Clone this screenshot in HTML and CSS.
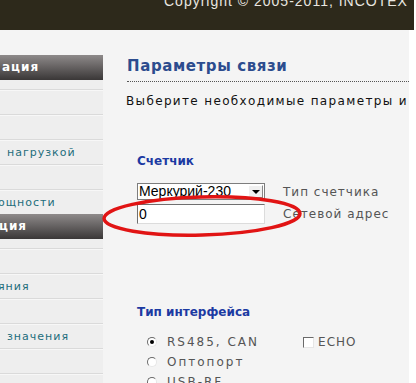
FILE: index.html
```html
<!DOCTYPE html>
<html lang="ru">
<head>
<meta charset="utf-8">
<title>Параметры связи</title>
<link rel="stylesheet" href="styles.css">
</head>
<body>
<div class="page">
  <header class="top">
    <div class="copyright">Copyright © 2005-2011, INCOTEX</div>
  </header>
  <div class="main">
    <nav class="sidebar">
      <div class="side-head"><span class="cut2">ация</span></div>
      <ul class="side-list">
        <li></li>
        <li></li>
        <li><span class="link">нагрузкой</span></li>
        <li></li>
        <li><span class="link cut">ощности</span></li>
      </ul>
      <div class="side-head"><span class="cut">ция</span></div>
      <ul class="side-list">
        <li></li>
        <li><span class="link cut">яния</span></li>
        <li></li>
        <li><span class="link">значения</span></li>
        <li></li>
        <li></li>
      </ul>
    </nav>
    <section class="content">
      <h1 class="title">Параметры связи</h1>
      <p class="intro">Выберите необходимые параметры и</p>

      <div class="group counter">
        <h2 class="group-title">Счетчик</h2>
        <div class="form-row">
          <div class="select"><span class="select-value">Меркурий-230</span><span class="select-btn"><span class="arrow"></span></span></div>
          <span class="field-label">Тип счетчика</span>
        </div>
        <div class="form-row">
          <div class="input">0</div>
          <span class="field-label">Сетевой адрес</span>
        </div>
        <svg class="mark" width="206" height="48" viewBox="0 0 206 48" aria-hidden="true">
          <ellipse cx="102" cy="24" rx="98" ry="19" fill="none" stroke="#e11414" stroke-width="3.5" transform="rotate(-1.5 102 24)"/>
        </svg>
      </div>

      <div class="group iface">
        <h2 class="group-title">Тип интерфейса</h2>
        <div class="opt-row">
          <span class="radio checked"></span><span class="opt-label">RS485, CAN</span>
          <span class="check"></span><span class="opt-label echo">ECHO</span>
        </div>
        <div class="opt-row">
          <span class="radio"></span><span class="opt-label">Оптопорт</span>
        </div>
        <div class="opt-row">
          <span class="radio"></span><span class="opt-label">USB-RF</span>
        </div>
      </div>
    </section>
  </div>
</div>
</body>
</html>
```
FILE: styles.css
```css
html, body {
  margin: 0;
  padding: 0;
  background: #ffffff;
  overflow: hidden;
}
body {
  width: 416px;
  height: 383px;
  font-family: "DejaVu Sans", Verdana, sans-serif;
}
.page {
  width: 414px;
  height: 383px;
  overflow: hidden;
}
.top {
  height: 30px;
  background: #2d291b;
  position: relative;
  overflow: hidden;
}
.copyright {
  position: absolute;
  left: 164px;
  top: -6px;
  font-family: "Liberation Sans", Arial, sans-serif;
  font-size: 14px;
  line-height: 14px;
  letter-spacing: 1px;
  color: #e8e6e0;
  white-space: nowrap;
}
.main {
  display: flex;
  width: 409px;
  height: 353px;
  background: #f4f4f4;
  padding-top: 25px;
  box-sizing: border-box;
}
.sidebar {
  width: 103px;
  flex: none;
  background: #eeeeee;
}
.side-head {
  height: 25px;
  background: linear-gradient(#8e8a8a, #3a3737);
  color: #ffffff;
  font-weight: bold;
  font-size: 12px;
  letter-spacing: 1px;
  line-height: 25px;
  padding-left: 2px;
  overflow: hidden;
  white-space: nowrap;
}
.side-head .cut { margin-left: -3px; }
.side-list {
  list-style: none;
  margin: 0;
  padding: 9px 0 0;
}
.side-list li {
  height: 24px;
  border-top: 1px solid #dadada;
  box-shadow: inset 0 1px 0 #f7f7f7;
  line-height: 25px;
  padding-left: 7px;
  font-size: 11px;
  letter-spacing: 1px;
  color: #1d6d7c;
  overflow: hidden;
  white-space: nowrap;
}
.side-list .link.cut { margin-left: -9px; }
.content {
  flex: 1;
  padding-left: 24px;
  position: relative;
}
.title {
  margin: 1px 0 0;
  font-size: 15px;
  line-height: 21px;
  letter-spacing: 0.6px;
  font-weight: bold;
  color: #2c4c8e;
  padding-bottom: 4px;
  border-bottom: 1px dotted #555555;
}
.intro {
  margin: 11px 0 0;
  font-size: 12px;
  line-height: 16px;
  letter-spacing: 1.35px;
  color: #111111;
  white-space: nowrap;
  margin-left: -1px;
}
.group {
  padding-left: 10px;
  position: relative;
}
.group-title {
  margin: 0;
  font-size: 12px;
  line-height: 16px;
  font-weight: bold;
  color: #1c3aa2;
}
.counter { margin-top: 44px; }
.counter .group-title { margin-bottom: 12px; }
.form-row {
  display: flex;
  align-items: center;
  gap: 18px;
  height: 21px;
}
.form-row + .form-row { margin-top: 1px; }
.select {
  width: 128px;
  height: 17px;
  box-sizing: border-box;
  border: 1px solid #7d7d7d;
  background: #ffffff;
  display: flex;
  align-items: stretch;
}
.select-value {
  flex: 1;
  font-family: "Liberation Sans", Arial, sans-serif;
  font-size: 14px;
  line-height: 15px;
  padding-left: 1px;
  color: #000000;
  overflow: hidden;
}
.select-btn {
  width: 13px;
  margin: 1px;
  background: #f0f0f0;
  border: 1px solid #ffffff;
  border-right-color: #888888;
  border-bottom-color: #888888;
  display: flex;
  align-items: center;
  justify-content: center;
}
.arrow {
  width: 0;
  height: 0;
  border-left: 4px solid transparent;
  border-right: 4px solid transparent;
  border-top: 4px solid #000000;
}
.input {
  width: 128px;
  height: 20px;
  box-sizing: border-box;
  border: 1px solid;
  border-color: #6f6f6f #dcdcdc #dcdcdc #6f6f6f;
  background: #ffffff;
  font-family: "Liberation Sans", Arial, sans-serif;
  font-size: 14px;
  line-height: 18px;
  padding-left: 1px;
  color: #000000;
}
.field-label {
  font-size: 12px;
  letter-spacing: 1px;
  color: #555555;
  white-space: nowrap;
}
.mark {
  position: absolute;
  left: -27px;
  top: 39px;
}
.iface { margin-top: 80px; }
.iface .group-title { margin-bottom: 12px; }
.opt-row {
  display: flex;
  align-items: center;
  height: 20px;
  padding-left: 10px;
}
.radio {
  width: 10px;
  height: 10px;
  box-sizing: border-box;
  border-radius: 50%;
  border: 1px solid;
  border-color: #6a6a6a #e6e6e6 #e6e6e6 #6a6a6a;
  background: #ffffff;
  position: relative;
  flex: none;
}
.radio.checked::after {
  content: "";
  position: absolute;
  left: 2px;
  top: 2px;
  width: 4px;
  height: 4px;
  border-radius: 50%;
  background: #000000;
}
.opt-label {
  margin-left: 10px;
  font-size: 12px;
  letter-spacing: 2px;
  color: #555555;
  white-space: nowrap;
}
.check {
  width: 11px;
  height: 11px;
  box-sizing: border-box;
  border: 1px solid;
  border-color: #6a6a6a #e6e6e6 #e6e6e6 #6a6a6a;
  background: #ffffff;
  margin-left: 44px;
  flex: none;
}
.opt-label.echo {
  margin-left: 4px;
  letter-spacing: 1px;
}
```
